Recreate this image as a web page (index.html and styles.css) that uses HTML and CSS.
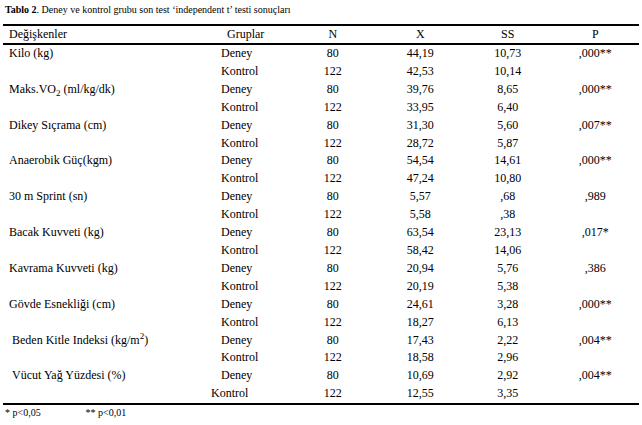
FILE: index.html
```html
<!DOCTYPE html>
<html lang="tr">
<head>
    <meta charset="UTF-8">
    <title>Tablo 2</title>
    <link rel="stylesheet" href="styles.css">
</head>
<body>

<div class="page">
    <div class="title"><b>Tablo 2</b>. Deney ve kontrol grubu son test ‘independent t’ testi sonuçları</div>

    <table class="results">
        <colgroup>
            <col class="c-var">
            <col class="c-grp">
            <col class="c-num">
            <col class="c-num">
            <col class="c-num">
            <col class="c-num">
        </colgroup>
        <thead>
            <tr>
                <th class="left">Değişkenler</th>
                <th class="grp-head">Gruplar</th>
                <th>N</th>
                <th>X</th>
                <th>SS</th>
                <th>P</th>
            </tr>
        </thead>
        <tbody>
            <tr><td class="left">Kilo (kg)</td><td class="grp">Deney</td><td>80</td><td>44,19</td><td>10,73</td><td>,000**</td></tr>
            <tr><td></td><td class="grp">Kontrol</td><td>122</td><td>42,53</td><td>10,14</td><td></td></tr>
            <tr><td class="left">Maks.VO<sub>2</sub> (ml/kg/dk)</td><td class="grp">Deney</td><td>80</td><td>39,76</td><td>8,65</td><td>,000**</td></tr>
            <tr><td></td><td class="grp">Kontrol</td><td>122</td><td>33,95</td><td>6,40</td><td></td></tr>
            <tr><td class="left">Dikey Sıçrama (cm)</td><td class="grp">Deney</td><td>80</td><td>31,30</td><td>5,60</td><td>,007**</td></tr>
            <tr><td></td><td class="grp">Kontrol</td><td>122</td><td>28,72</td><td>5,87</td><td></td></tr>
            <tr><td class="left">Anaerobik Güç(kgm)</td><td class="grp">Deney</td><td>80</td><td>54,54</td><td>14,61</td><td>,000**</td></tr>
            <tr><td></td><td class="grp">Kontrol</td><td>122</td><td>47,24</td><td>10,80</td><td></td></tr>
            <tr><td class="left">30 m Sprint (sn)</td><td class="grp">Deney</td><td>80</td><td>5,57</td><td>,68</td><td>,989</td></tr>
            <tr><td></td><td class="grp">Kontrol</td><td>122</td><td>5,58</td><td>,38</td><td></td></tr>
            <tr><td class="left">Bacak Kuvveti (kg)</td><td class="grp">Deney</td><td>80</td><td>63,54</td><td>23,13</td><td>,017*</td></tr>
            <tr><td></td><td class="grp">Kontrol</td><td>122</td><td>58,42</td><td>14,06</td><td></td></tr>
            <tr><td class="left">Kavrama Kuvveti (kg)</td><td class="grp">Deney</td><td>80</td><td>20,94</td><td>5,76</td><td>,386</td></tr>
            <tr><td></td><td class="grp">Kontrol</td><td>122</td><td>20,19</td><td>5,38</td><td></td></tr>
            <tr><td class="left">Gövde Esnekliği (cm)</td><td class="grp">Deney</td><td>80</td><td>24,61</td><td>3,28</td><td>,000**</td></tr>
            <tr><td></td><td class="grp">Kontrol</td><td>122</td><td>18,27</td><td>6,13</td><td></td></tr>
            <tr><td class="left indent">Beden Kitle Indeksi (kg/m<sup>2</sup>)</td><td class="grp">Deney</td><td>80</td><td>17,43</td><td>2,22</td><td>,004**</td></tr>
            <tr><td></td><td class="grp">Kontrol</td><td>122</td><td>18,58</td><td>2,96</td><td></td></tr>
            <tr><td class="left indent">Vücut Yağ Yüzdesi (%)</td><td class="grp">Deney</td><td>80</td><td>10,69</td><td>2,92</td><td>,004**</td></tr>
            <tr><td></td><td class="grp shift">Kontrol</td><td>122</td><td>12,55</td><td>3,35</td><td></td></tr>
        </tbody>
    </table>

    <div class="notes">
        <span class="note">* p&lt;0,05</span>
        <span>** p&lt;0,01</span>
    </div>
</div>

</body>
</html>
```

FILE: styles.css
```css
body {
    margin: 0;
    padding: 0;
    background-color: #fff;
    color: #000;
    font-family: "Liberation Serif", "Times New Roman", serif;
}
.page {
    width: 636px;
    padding: 0 3px;
}
.title {
    height: 24px;
    line-height: 20px;
    font-size: 10px;
    padding-left: 2px;
}
.results {
    width: 636px;
    border-collapse: collapse;
    table-layout: fixed;
    font-size: 12px;
    border-top: 2px solid #000;
    border-bottom: 2px solid #000;
}
.c-var {
    width: 213px;
}
.c-grp {
    width: 73px;
}
.c-num {
    width: 87.5px;
}
.results th {
    font-weight: normal;
    height: 17px;
    line-height: 17px;
    padding: 0;
    text-align: center;
    border-bottom: 2px solid #000;
}
.results td {
    height: 17.9px;
    line-height: 17.9px;
    padding: 0;
    text-align: center;
    white-space: nowrap;
}
.results .left {
    text-align: left;
    padding-left: 6px;
}
.results .indent {
    padding-left: 9px;
}
.results .grp {
    text-align: left;
    padding-left: 5px;
}
.results .grp-head {
    text-align: left;
    padding-left: 11px;
}
.results .shift {
    text-indent: -10px;
}
sub, sup {
    font-size: 9px;
    line-height: 0;
}
.notes {
    font-size: 10px;
    line-height: 16px;
    padding-left: 2px;
}
.note {
    display: inline-block;
    width: 78px;
}
```
